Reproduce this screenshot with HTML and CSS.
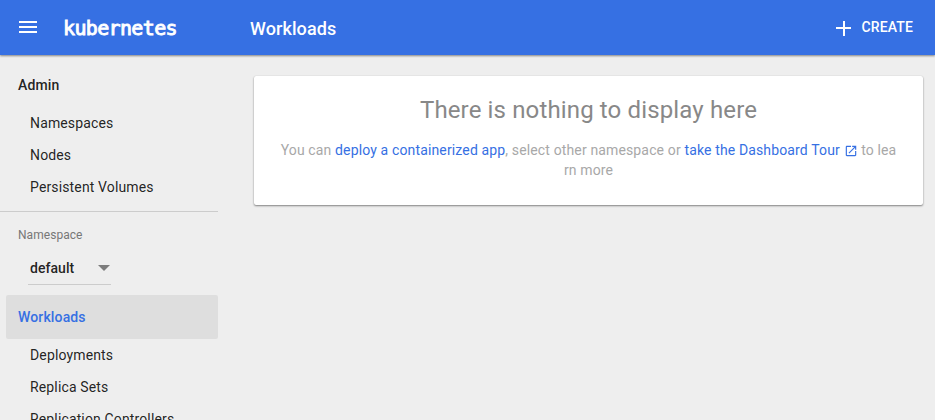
FILE: index.html
```html
<!DOCTYPE html>
<html lang="en">
<head>
<meta charset="utf-8">
<title>Workloads - Kubernetes Dashboard</title>
<link rel="stylesheet" href="styles.css">
</head>
<body>
<header class="toolbar">
  <svg class="menu-icon" viewBox="0 0 24 24"><path d="M3 18h18v-2H3v2zm0-5h18v-2H3v2zm0-7v2h18V6H3z"/></svg>
  <span class="logo">kubernetes</span>
  <h1 class="title">Workloads</h1>
  <button class="create"><svg viewBox="0 0 24 24"><path d="M19 13h-6v7h-2v-7H4v-2h7V5h2v6h6z"/></svg><span>CREATE</span></button>
</header>
<div class="body">
  <nav class="nav">
    <a class="group">Admin</a>
    <a class="item">Namespaces</a>
    <a class="item">Nodes</a>
    <a class="item">Persistent Volumes</a>
    <div class="namespace">
      <label class="label">Namespace</label>
      <div class="select"><span>default</span><i class="arrow"></i></div>
    </div>
    <a class="group active">Workloads</a>
    <a class="item">Deployments</a>
    <a class="item">Replica Sets</a>
    <a class="item">Replication Controllers</a>
  </nav>
  <main class="content">
    <section class="card">
      <h2 class="card-title">There is nothing to display here</h2>
      <p class="card-text">You can <a>deploy a containerized app</a>, select other namespace or <a>take the Dashboard Tour <svg class="open-icon" viewBox="0 0 24 24"><path d="M19 19H5V5h7V3H5c-1.110 0-2 .9-2 2v14c0 1.100.89 2 2 2h14c1.100 0 2-.9 2-2v-7h-2v7zM14 3v2h3.590l-9.830 9.830 1.410 1.410L19 6.410V10h2V3h-7z"/></svg></a> to lea<br>rn more</p>
    </section>
  </main>
</div>
</body>
</html>
```
FILE: styles.css
```css
* { box-sizing: border-box; }
body {
  margin: 0;
  height: 420px;
  overflow: hidden;
  display: flex;
  flex-direction: column;
  background: #eee;
  color: rgba(0, 0, 0, .87);
  font: 14px/20px Roboto, sans-serif;
  letter-spacing: .14px;
}
.toolbar {
  position: relative;
  flex: none;
  display: flex;
  align-items: center;
  height: 55px;
  padding: 0 22px 0 16px;
  background: #3670e3;
  color: #fff;
  box-shadow: 0 1px 2px rgba(0, 0, 0, .45);
}
.menu-icon { width: 24px; height: 24px; margin-top: -1px; fill: #fff; }
.logo {
  width: 187px;
  margin-left: 23px;
  font: 400 20px/24px "DejaVu Sans Mono", monospace;
  letter-spacing: -.65px;
  -webkit-text-stroke: .9px #fff;
}
.title { margin: 2px 0 0; font-size: 18px; font-weight: 500; line-height: 24px; letter-spacing: .1px; }
.create {
  display: flex;
  align-items: center;
  gap: 5px;
  margin-left: auto;
  padding: 0;
  border: 0;
  background: none;
  color: #fff;
  font: 500 14px/20px Roboto, sans-serif;
  letter-spacing: .14px;
}
.create svg { width: 24px; height: 24px; fill: #fff; }
.create span { margin-bottom: 1px; }
.body { flex: 1; display: flex; min-height: 0; }
.nav { flex: none; width: 218px; padding-top: 8px; overflow: hidden; }
.group { display: block; height: 44px; margin-left: 6px; padding: 12px; font-weight: 500; }
.item { display: block; height: 32px; padding: 6px 0 6px 30px; white-space: nowrap; }
.active { border-radius: 2px; background: #dedede; color: #3670e3; }
.namespace { height: 84px; margin-top: 8px; padding: 13px 18px 0; border-top: 1px solid #ccc; }
.label { display: block; font-size: 12px; line-height: 20px; letter-spacing: .05px; color: #777; }
.select {
  display: flex;
  align-items: center;
  justify-content: space-between;
  width: 83px;
  height: 30px;
  margin: 10px 0 0 10px;
  padding: 0 1px 3px 2px;
  border-bottom: 1px solid #ccc;
  font-weight: 500;
  letter-spacing: .05px;
}
.arrow { margin-top: -1px; border: 6px solid transparent; border-top-color: #7c7c7c; border-bottom: 0; }
.content { flex: 1; padding: 21px 12px 0 36px; }
.card {
  height: 129px;
  padding-top: 18px;
  border-radius: 2px;
  background: #fff;
  box-shadow: 0 1px 2px rgba(0, 0, 0, .45), 0 0 1px rgba(0, 0, 0, .15);
  text-align: center;
}
.card-title { margin: 0; color: #888; font-size: 24px; font-weight: 400; line-height: 32px; letter-spacing: .14px; }
.card-text { margin: 14px 0 0; color: #a8a8a8; letter-spacing: .14px; white-space: nowrap; }
.card-text a { color: #3670e3; }
.open-icon { width: 14px; height: 14px; fill: currentColor; vertical-align: -3px; }
```
